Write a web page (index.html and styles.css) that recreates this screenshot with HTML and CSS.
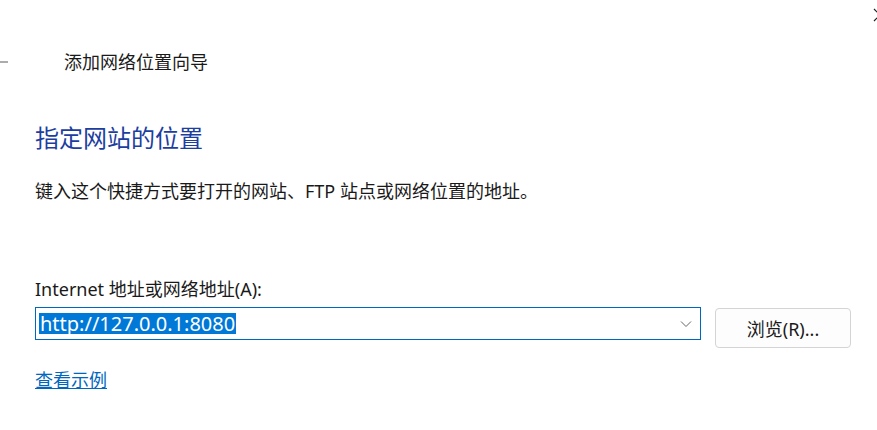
FILE: index.html
```html
<!DOCTYPE html>
<html lang="zh-CN">
<head>
<meta charset="utf-8">
<title>添加网络位置向导</title>
<link rel="stylesheet" href="styles.css">
</head>
<body>
<div class="window">
  <svg class="close" width="20" height="20" viewBox="0 0 20 20"><path d="M4 4 L16 16 M16 4 L4 16" stroke="#222" stroke-width="1.2" fill="none"/></svg>
  <header class="titlebar">
    <svg class="back" width="24" height="16" viewBox="0 0 24 16"><path d="M22 8 H2 M8 2 L2 8 L8 14" stroke="#5a5a5a" stroke-width="1.2" fill="none"/></svg>
    <span class="title">添加网络位置向导</span>
  </header>
  <main class="content">
    <h1 class="heading">指定网站的位置</h1>
    <p class="desc">键入这个快捷方式要打开的网站、FTP 站点或网络位置的地址。</p>
    <label class="label">Internet 地址或网络地址(A):</label>
    <div class="row">
      <div class="combo">
        <span class="value">http://127.0.0.1:8080</span>
        <svg class="chev" width="12" height="8" viewBox="0 0 12 8"><path d="M1 1.5 L6 6.5 L11 1.5" stroke="#666" stroke-width="1" fill="none"/></svg>
      </div>
      <button class="btn">浏览(R)...</button>
    </div>
    <a class="link" href="#">查看示例</a>
  </main>
</div>
</body>
</html>
```
FILE: styles.css
```css
html, body {
  margin: 0;
  padding: 0;
  background: #ffffff;
}
body {
  font-family: "Noto Sans", "Noto Sans CJK SC", sans-serif;
  color: #1a1a1a;
  width: 877px;
  height: 430px;
  overflow: hidden;
}
.window {
  position: relative;
  width: 877px;
  height: 430px;
  overflow: hidden;
}
.close {
  position: absolute;
  left: 870px;
  top: 5px;
}
.titlebar {
  display: flex;
  align-items: center;
  height: 24px;
  margin-top: 50px;
  font-size: 18px;
  line-height: 24px;
}
.back {
  margin-left: -14px;
  margin-right: 54px;
}
.title {
  color: #1a1a1a;
}
.content {
  padding-left: 35px;
  display: flex;
  flex-direction: column;
  align-items: flex-start;
}
.heading {
  margin: 48px 0 0 0;
  font-size: 24px;
  line-height: 32px;
  font-weight: 400;
  color: #1c3ea0;
}
.desc {
  margin: 25px 0 0 0;
  font-size: 18px;
  line-height: 24px;
}
.label {
  margin-top: 74px;
  font-size: 18px;
  line-height: 24px;
}
.row {
  display: flex;
  align-items: flex-start;
  gap: 14px;
  margin-top: 6px;
}
.combo {
  box-sizing: border-box;
  width: 666px;
  height: 33px;
  border: 1px solid #0067c0;
  display: flex;
  align-items: center;
  justify-content: space-between;
  padding: 0 8px 0 3px;
}
.value {
  background: #0078d7;
  color: #ffffff;
  font-size: 20px;
  line-height: 21px;
  padding: 0 1px;
}
.chev {
  margin-top: 1px;
}
.btn {
  box-sizing: border-box;
  width: 136px;
  height: 40px;
  margin-top: 1px;
  border: 1px solid #d4d4d4;
  border-radius: 4px;
  background: #fdfdfd;
  font-family: "Noto Sans", "Noto Sans CJK SC", sans-serif;
  font-size: 18px;
  color: #1a1a1a;
  padding: 0;
}
.link {
  margin-top: 20px;
  font-size: 18px;
  line-height: 24px;
  color: #0067c0;
  text-decoration: underline;
}
```
